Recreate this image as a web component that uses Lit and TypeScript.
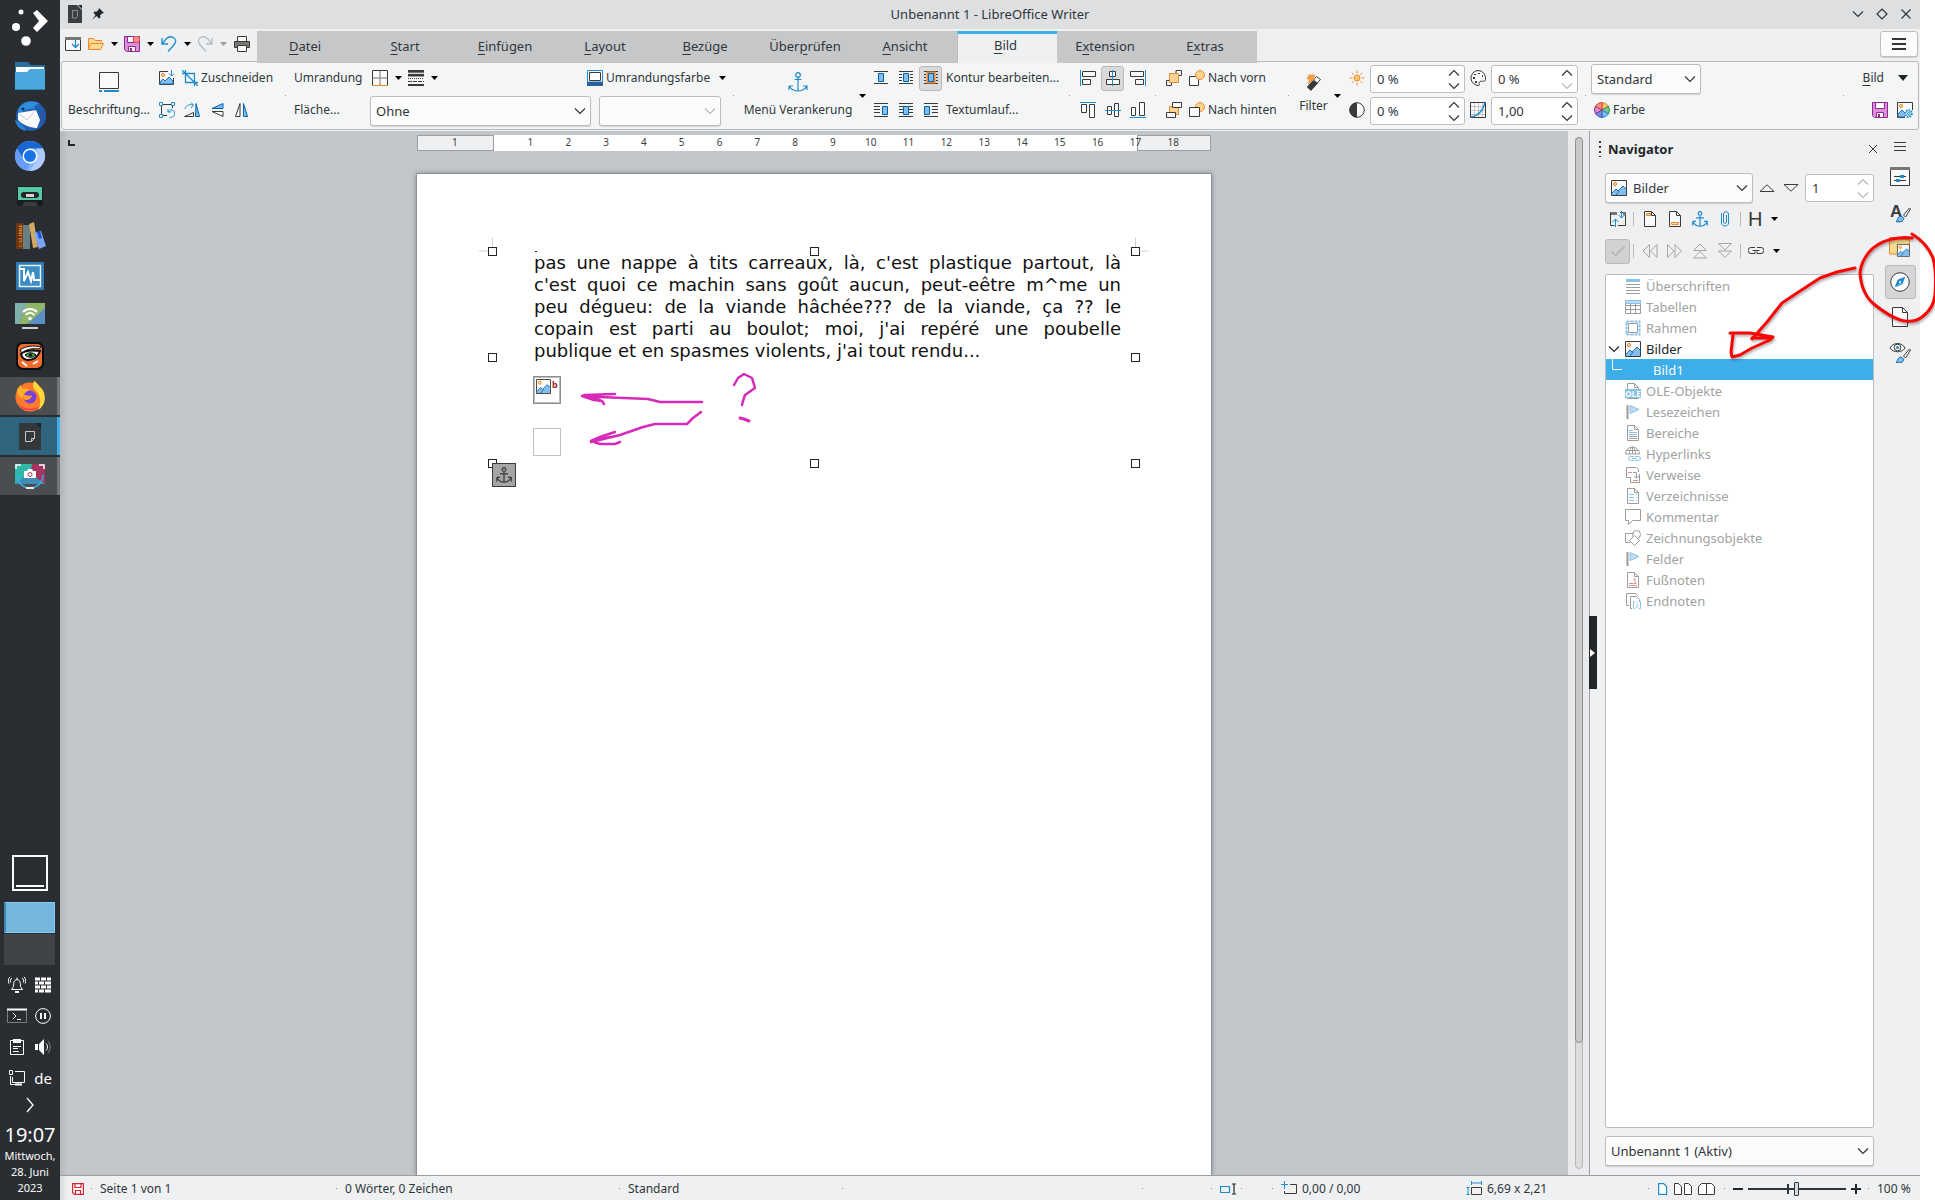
import { LitElement, html, css, svg, nothing, TemplateResult } from "lit";
import { customElement, property, state } from "lit/decorators.js";
import { classMap } from "lit/directives/class-map.js";

type Drawing = { box?: string; w?: number; h?: number; body: unknown };

const page = svg`<path d="M2.5 .5h7l4 4v11h-11z" fill="#fafafa" stroke="#3a3a38"/><path d="M9.5 .5v4h4" fill="none" stroke="#3a3a38"/>`;
const greyPage = svg`<path d="M2.5 .5h7l4 4v11h-11z" fill="#fff" stroke="#9c9c9b"/><path d="M9.5 .5v4h4" fill="none" stroke="#9c9c9b"/>`;
const picture = svg`<path d="M.5 .5h15v15H.5z" fill="#fafafa" stroke="#3a3a38"/><path d="M1 13l4-4 2 2 5-5 3 3v6H1z" fill="#83beec"/><path d="M1 13l4-4 2 2 5-5 3 3M5 15l3-4" fill="none" stroke="#1e6fb4"/><circle cx="4" cy="4" r="1.6" fill="#fbdba0" stroke="#ed8733"/>`;
const flag = svg`<path d="M2.5 1v14" stroke="#9c9c9b" stroke-width="2"/><path d="M5 1.500l9 4-9 4z" fill="#bddcf5" stroke="#8ac1e6"/>`;
const brush = svg`<path d="M19.500 5l-6 7 2 2 5-8z" fill="#fafafa" stroke="#3a3a38"/><path d="M6 18.500c2-1 1-5 5-5.500l3 2.500c-1 3-4 4-8 3z" fill="#83beec" stroke="#0063b1"/>`;

const lines = (x1: number, x2: number, ys: number[]) =>
  svg`<path d="${ys.map((y) => `M${x1} ${y}.5H${x2}`).join("")}" stroke="#3a3a38" fill="none"/>`;
const block = (x: number) => svg`<path d="M${x}.5 4.500h5v8h-5z" fill="#83beec" stroke="#0063b1"/>`;

const icons: Record<string, Drawing> = {
  newdoc: { body: svg`<path d="M.5 1.500h15v13H.5z" fill="#fafafa" stroke="#3a3a38"/><path d="M0 1h16v3H0z" fill="#797774"/><path d="M10.500 3v8M7 8l3.500 3.500L14 8" fill="none" stroke="#1e8bcd" stroke-width="1.300"/>` },
  open: { body: svg`<path d="M.5 13.500v-11h5l2 2h6v2M.5 13.500l2-6h13l-3 6z" fill="#f8db8f" stroke="#ed8733"/>` },
  save: { body: svg`<path d="M.5 .5h15v15h-13l-2-2z" fill="#d98fdc" stroke="#92278f"/><path d="M3.500 .5h9v6h-9zM4.500 10.500h7v5h-7z" fill="#fafafa" stroke="#92278f"/><path d="M6 12h2v3H6z" fill="#92278f"/>` },
  saveDot: { body: svg`<path d="M.5 .5h15v15h-13l-2-2z" fill="#d98fdc" stroke="#92278f"/><path d="M3.500 .5h6v6h-6zM4.500 10.500h7v5h-7z" fill="#fafafa" stroke="#92278f"/><path d="M6 12h2v3H6z" fill="#92278f"/><circle cx="12.500" cy="3.500" r="3.400" fill="#f98b8b" stroke="#e5484d"/>` },
  undo: { body: svg`<path d="M1 2v6h6M1 8l4-5c3-3 7-3 9 0s0 5-2 7l-5 5.500" fill="none" stroke="#1e8bcd" stroke-width="1.300"/>` },
  redo: { body: svg`<path d="M15 2v6H9M15 8l-4-5C8 0 4 0 2 3s0 5 2 7l5 5.500" fill="none" stroke="#b9bcbe" stroke-width="1.300"/>` },
  print: { body: svg`<path d="M3.500 .5h9v5h-9z" fill="#fafafa" stroke="#3a3a38"/><path d="M.5 5.500h15v6H.5z" fill="#797774" stroke="#3a3a38"/><path d="M3.500 9.500h9v6h-9z" fill="#fafafa" stroke="#3a3a38"/>` },
  caption: { w: 20, h: 20, box: "0 0 20 20", body: svg`<path d="M.5 .5h19v16H.5z" fill="#fafafa" stroke="#3a3a38"/><path d="M0 19h3M5 19h15" stroke="#1e8bcd" stroke-width="2"/>` },
  picExport: { body: svg`<path d="M9 1.500H.5v13h14V8" fill="#fafafa" stroke="#3a3a38"/><path d="M1 14v-2l3-3 2 2 4-4 4 4v3z" fill="#83beec" stroke="#1e6fb4"/><circle cx="4" cy="5" r="1.600" fill="#fbdba0" stroke="#ed8733"/><path d="M12.500 0v6M10 3.500l2.500 2.500L15 3.500" fill="none" stroke="#1e8bcd"/>` },
  crop: { body: svg`<path d="M3.500 0v12.500H16M0 3.500h12.500V16M0 0l16 16" fill="none" stroke="#1e8bcd" stroke-width="1.300"/>` },
  rotateBox: { body: svg`<path d="M2.500 3v10M3 2.500h10M3 13.500h5M13.500 3v3" stroke="#3a3a38" fill="none"/><path d="M.5 .5h3v3h-3zM12.500 .5h3v3h-3zM.5 12.500h3v3h-3z" fill="#fafafa" stroke="#1e8bcd"/><path d="M9 7v3h3M9.500 10c2-4 6-2 6 1.500s-3 4-5 4" fill="none" stroke="#1e8bcd"/>` },
  rotate: { body: svg`<path d="M12 1.500l3.500 13h-4z" fill="#83beec" stroke="#0063b1"/><path d="M.5 14.500h9v-4z" fill="#fafafa" stroke="#3a3a38"/><path d="M1 7c1-4 5-5 8-4M7 .5L9.500 3 7 6" fill="none" stroke="#1e8bcd"/>` },
  flipV: { body: svg`<path d="M14 1.500v5H3z" fill="#83beec" stroke="#0063b1"/><path d="M14 14.500v-5H3z" fill="#fafafa" stroke="#3a3a38"/>` },
  flipH: { body: svg`<path d="M6 1.500v13H1.500z" fill="#fafafa" stroke="#3a3a38"/><path d="M9.500 1.500v13h4z" fill="#83beec" stroke="#0063b1"/>` },
  borders: { body: svg`<path d="M.5 15V.5h15V15" fill="#fafafa" stroke="#3a3a38"/><path d="M8 1v14M1 8h14" stroke="#797774"/><path d="M0 15.500h16" stroke="#ed8733"/>` },
  lineStyle: { body: svg`<path d="M0 1.500h16M0 5h16" stroke="#3a3a38" stroke-width="3"/><path d="M0 5h16" stroke="#3a3a38" stroke-width="2"/><path d="M0 3.200h16" stroke="#f4f6f5"/><path d="M0 8.500h16" stroke="#3a3a38" stroke-dasharray="1 1"/><path d="M0 11.500h16" stroke="#3a3a38" stroke-dasharray="4 1"/><path d="M0 15h16" stroke="#3a3a38" stroke-width="2"/>` },
  borderColor: { body: svg`<path d="M.5 .5h15V12H.5z" fill="#fafafa" stroke="#1e8bcd"/><path d="M2.500 2.500h11v8h-11z" fill="#fff" stroke="#3a3a38"/><path d="M0 12h16v4H0z" fill="#2a6099"/>` },
  anchor: { w: 20, h: 20, box: "0 0 20 20", body: svg`<g fill="none" stroke="#1e8bcd" stroke-width="1.200"><circle cx="10" cy="3" r="2.300"/><path d="M10 5.500V19M6.500 7.500h7M1 14v4M1 14h4M1 14c2 3 5 5 9 5s7-2 9-5h-4M19 14v4"/></g>` },
  wrapNone: { body: svg`${lines(1, 15, [1, 13])}<path d="M5.500 3.500h5v8h-5z" fill="#83beec" stroke="#0063b1"/>` },
  wrapPage: { body: svg`${lines(1, 15, [1, 13])}${lines(1, 4, [4, 7, 10])}${lines(12, 15, [4, 7, 10])}<path d="M5.500 3.500h5v8h-5z" fill="#83beec" stroke="#0063b1"/>` },
  wrapContour: { body: svg`${lines(1, 15, [1, 13])}${lines(1, 3, [4, 7, 10])}${lines(13, 15, [4, 7, 10])}<path d="M4.500 2.500h7v10h-7z" fill="none" stroke="#ed8733" stroke-width="2"/><path d="M5.500 3.500h5v8h-5z" fill="#83beec" stroke="#0063b1"/>` },
  wrapLeft: { body: svg`${lines(1, 15, [1, 14])}${lines(1, 7, [4, 7, 10])}${block(9)}` },
  wrapThrough: { body: svg`${lines(1, 15, [1, 4, 7, 10, 14])}${block(5)}` },
  wrapRight: { body: svg`${lines(1, 15, [1, 14])}${lines(9, 15, [4, 7, 10])}${block(1)}` },
  alignL: { body: svg`<path d="M.5 0v16" stroke="#1e8bcd"/><path d="M2.500 1.500h13v5h-13zM2.500 9.500h8v5h-8z" fill="#fafafa" stroke="#3a3a38"/>` },
  alignC: { body: svg`<path d="M4.500 1.500h6v5h-6zM1.500 9.500h13v5h-13z" fill="#fafafa" stroke="#3a3a38"/><path d="M7.500 0v16" stroke="#1e8bcd"/>` },
  alignR: { body: svg`<path d="M15.500 0v16" stroke="#1e8bcd"/><path d="M.5 1.500h13v5H.5zM5.500 9.500h8v5h-8z" fill="#fafafa" stroke="#3a3a38"/>` },
  alignT: { body: svg`<path d="M0 .5h16" stroke="#1e8bcd"/><path d="M1.500 2.500h5v8h-5zM9.500 2.500h5v13h-5z" fill="#fafafa" stroke="#3a3a38"/>` },
  alignM: { body: svg`<path d="M2.500 4.500h4v8h-4zM9.500 1.500h4v13h-4z" fill="#fafafa" stroke="#3a3a38"/><path d="M0 8.500h16" stroke="#1e8bcd"/>` },
  alignB: { body: svg`<path d="M0 15.500h16" stroke="#1e8bcd"/><path d="M1.500 5.500h4v8h-4zM9.500 .5h5v13h-5z" fill="#fafafa" stroke="#3a3a38"/>` },
  front: { body: svg`<path d="M10 3V.5h5.500v5H13M5.500 13v2.500h-5v-5H3" fill="none" stroke="#3a3a38"/><path d="M3.500 3.500h9v9h-9z" fill="#fbd48f" stroke="#ed8733"/>` },
  forward: { body: svg`<path d="M.5 6.500h9v9h-9z" fill="#fafafa" stroke="#3a3a38"/><circle cx="11" cy="5" r="4.500" fill="#fbd48f" stroke="#ed8733"/>` },
  back: { body: svg`<path d="M3.500 4.500h9v8h-9z" fill="#fbd48f" stroke="#ed8733"/><path d="M6.500 .5h9v5h-9zM.5 10.500h9v5h-9z" fill="#fafafa" stroke="#3a3a38"/>` },
  backward: { body: svg`<circle cx="11" cy="5" r="4.500" fill="#fbd48f" stroke="#ed8733"/><path d="M.5 5.500h10v9H.5z" fill="#fafafa" stroke="#3a3a38"/>` },
  filter: { w: 18, h: 18, box: "0 0 18 18", body: svg`<path d="M11.500 2.500l4 3L6 16l-3.500-3z" fill="#fafafa" stroke="#3a3a38"/><path d="M9 6l4 3-7 8-4-4z" fill="#3a3a38"/><path d="M4 1h6L7.500 4H10L3 10l2-5H2z" fill="#f4a13b" stroke="#ed8733" stroke-width=".7"/>` },
  sun: { body: svg`<circle cx="8" cy="8" r="3" fill="#f9c66b" stroke="#ed8733"/><path d="M8 .5v3M8 12.500v3M.5 8h3M12.500 8h3M2.700 2.700l2 2M11.300 11.300l2 2M13.300 2.700l-2 2M4.700 11.300l-2 2" stroke="#ed8733"/>` },
  contrast: { body: svg`<circle cx="8" cy="8" r="7.300" fill="#fafafa" stroke="#3a3a38"/><path d="M8 .5a7.500 7.500 0 0 0 0 15z" fill="#3a3a38"/>` },
  palette: { body: svg`<path d="M8 .5a7.500 7.500 0 1 0 1 15c1-1-1-3 1-4s5 1 5.500-2A7.700 7.700 0 0 0 8 .5z" fill="#fafafa" stroke="#3a3a38"/><path d="M3 7h2v2H3zM4 4h2v1H4zM8 3h2v1H8zM12 5h1v2h-1zM5 11h2v2H5z" fill="#3a3a38"/>` },
  gamma: { body: svg`<path d="M.5 .5h15v15H.5z" fill="#fafafa" stroke="#3a3a38"/><path d="M4.500 1v14M8.500 1v14M12.500 1v14M1 4.500h14M1 8.500h14M1 12.500h14" stroke="#c8c6c4"/><path d="M1 15C9 14 13 8 15 1" fill="none" stroke="#1e8bcd" stroke-width="1.500"/>` },
  wheel: { body: svg`<path d="M8 8L8 .5A7.500 7.500 0 0 1 14.500 4.300z" fill="#f9c66b" stroke="#ed8733"/><path d="M8 8l6.500-3.700a7.500 7.500 0 0 1 0 7.500z" fill="#79c795" stroke="#309048"/><path d="M8 8l6.500 3.800A7.500 7.500 0 0 1 8 15.500z" fill="#83beec" stroke="#1e8bcd"/><path d="M8 8v7.500a7.500 7.500 0 0 1-6.500-3.800z" fill="#6f8fe0" stroke="#3a5fc0"/><path d="M8 8l-6.500 3.700a7.500 7.500 0 0 1 0-7.500z" fill="#d98fdc" stroke="#92278f"/><path d="M8 8L1.500 4.200A7.500 7.500 0 0 1 8 .5z" fill="#f98b8b" stroke="#d33b3b"/>` },
  picGear: { body: svg`<path d="M.5 .5h15v15H.5z" fill="#fafafa" stroke="#3a3a38"/><path d="M1 12l4-4 4 4v3H1z" fill="#83beec" stroke="#1e6fb4"/><circle cx="4" cy="4" r="1.600" fill="#fbdba0" stroke="#ed8733"/><path d="M8 8h8v8H8z" fill="#f4f6f5"/><circle cx="11.500" cy="11.500" r="3.300" fill="#bfe0f7" stroke="#1e8bcd" stroke-width="2" stroke-dasharray="1.500 1"/><circle cx="11.500" cy="11.500" r="1" fill="#fff" stroke="#1e8bcd"/>` },
  picture: { body: picture },
  navWin: { body: svg`<path d="M6 1.500H.5v13h4M10 1.500h5.500v13H8" fill="none" stroke="#3a3a38"/><path d="M1 1h6v3H1zM13 1h3v3h-3z" fill="#797774"/><path d="M11.500 0v7M8.500 4l3 3 3-3M5.500 16V8M2.500 11l3-3 3 3" fill="none" stroke="#1e8bcd"/>` },
  header: { body: svg`${page}<path d="M4.500 2.500h4v2h-4z" fill="#fbdba0" stroke="#ed8733"/>` },
  footer: { body: svg`${page}<path d="M4.500 11.500h7v2h-7z" fill="#fbdba0" stroke="#ed8733"/>` },
  anchorSmall: { box: "0 0 20 20", body: svg`<g fill="none" stroke="#1e8bcd" stroke-width="1.500"><circle cx="10" cy="3" r="2.300"/><path d="M10 5.500V19M5 8.500h10M1 13v5M1 13h4M1 13c2 4 5 6 9 6s7-2 9-6h-4M19 13v5"/></g>` },
  clip: { body: svg`<path d="M9.500 4v7c0 1.500-3 1.500-3 0V3c0-3 5-3 5 0v9c0 4-7 4-7 0V2" fill="none" stroke="#1e8bcd"/>` },
  check: { body: svg`<path d="M1.500 8.500l4 4 9-9" fill="none" stroke="#b4b5b6" stroke-width="1.600"/>` },
  prev: { body: svg`<path d="M7.500 1.500v13L1 8zM15 1.500v13L8.500 8z" fill="none" stroke="#a3a5a7"/>` },
  next: { body: svg`<path d="M.5 1.500v13L7 8zM8 1.500v13L14.500 8z" fill="none" stroke="#a3a5a7"/>` },
  promote: { body: svg`<path d="M1.500 7.500h13L8 1zM1.500 15h13L8 8.500z" fill="none" stroke="#a3a5a7"/>` },
  demote: { body: svg`<path d="M1.500 .5h13L8 7zM1.500 8h13L8 14.500z" fill="none" stroke="#a3a5a7"/>` },
  link: { body: svg`<path d="M7 4.500H3a3 3 0 0 0 0 6h4v-2M9 4.500h4a3 3 0 0 1 0 6H9v-2M4.500 7.500h7" fill="none" stroke="#3a3a38"/>` },
  triUp: { box: "0 0 16 8", h: 8, body: svg`<path d="M1 7.500h14L8 .8z" fill="none" stroke="#3a3a38"/>` },
  triDown: { box: "0 0 16 8", h: 8, body: svg`<path d="M1 .5h14L8 7.200z" fill="none" stroke="#3a3a38"/>` },
  headings: { body: svg`<path d="M1 1h14v3H1z" fill="#8ac1e6"/><path d="M1 6.500h14M1 9.500h14M1 12.500h14M1 15.500h14" stroke="#9c9c9b"/>` },
  tables: { body: svg`<path d="M.5 1.500h15v13H.5z" fill="#fff" stroke="#9c9c9b"/><path d="M1 6.500h14M1 10.500h14M5.500 5v9M10.500 5v9" stroke="#9c9c9b"/><path d="M.5 1.500h15v3H.5z" fill="#bddcf5" stroke="#8ac1e6"/>` },
  frames: { body: svg`<path d="M3.500 3.500h9v9h-9z" fill="#fff" stroke="#9c9c9b"/><path d="M1.500 1.500h13v13h-13z" fill="none" stroke="#8ac1e6" stroke-width="2" stroke-dasharray="3 1"/>` },
  ole: { body: svg`<path d="M2.500 6V.5h7l4 4V6M2.500 14v1.500h11V14M9.500 .5v4h4" fill="none" stroke="#9c9c9b"/><path d="M0 6h16v9H0z" fill="#8ac1e6"/><text x="8" y="13.500" text-anchor="middle" font-size="8" font-weight="700" font-family="Noto Sans, sans-serif" fill="#fff">OLE</text>` },
  flag: { body: flag },
  sections: { body: svg`${greyPage}<path d="M4 5.500h4M4 7.500h8M4 9.500h8" stroke="#8ac1e6"/><path d="M4 11.500h8M4 13.500h8" stroke="#9c9c9b"/>` },
  hyper: { body: svg`<path d="M.5 8a7 7 0 0 1 14 0zM4.500 8c0-9 6-9 6 0M7.500 1v7M1.500 4.500h12" fill="none" stroke="#9c9c9b"/><path d="M9 10.500H5.500a2 2 0 0 0 0 4H9M10 10.500h3.500a2 2 0 0 1 0 4H10M7 12.500h5" fill="none" stroke="#8ac1e6"/>` },
  refs: { body: svg`<path d="M5 10.500H1.500v-10h10l2 2V5M5.500 10v5.500h9V7" fill="none" stroke="#9c9c9b"/><path d="M3 5.500h4M8 13.500h5" stroke="#f08a8a"/><path d="M8 5.500h3.500V11M9 9l2.500 2L14 9" fill="none" stroke="#9c9c9b"/>` },
  indexes: { body: svg`${greyPage}<path d="M4 6.500h5M4 9.500h5M4 12.500h5" stroke="#8ac1e6"/><path d="M11 6.500h1M11 9.500h1M11 12.500h1" stroke="#8ac1e6"/>` },
  comment: { body: svg`<path d="M.5 .5h15v11h-8l-4 4v-4h-3z" fill="#fff" stroke="#9c9c9b"/>` },
  shapes: { body: svg`<path d="M9 3.500H.5v9h5" fill="none" stroke="#9c9c9b"/><circle cx="11.500" cy="4.500" r="4" fill="none" stroke="#9c9c9b"/><path d="M9.500 5.500l5 5-5 5-5-5z" fill="#fff" stroke="#9c9c9b"/>` },
  footnote: { body: svg`${greyPage}<path d="M4 11.500h4" stroke="#9c9c9b"/><path d="M4 13.500h8M8.500 7.500l1.500-1v5M8.500 11.500h3" fill="none" stroke="#f08a8a"/>` },
  endnote: { body: svg`<path d="M4 12.500H1.500V.5h9l2 2M5.500 3.500h6l3 3V8M7 15.500H5.500v-12" fill="none" stroke="#9c9c9b"/><path d="M10 8.500H8.500v7H10M14 8.500h1.500v7H14M12 9v1M12 11v4" fill="none" stroke="#8ac1e6"/>` },
  menu: { w: 12, h: 12, box: "0 0 12 12", body: svg`<path d="M0 1.500h12M0 5.500h12M0 9.500h12" stroke="#3a3a38"/>` },
  menuBold: { w: 14, h: 14, box: "0 0 14 14", body: svg`<path d="M0 2h14M0 7h14M0 12h14" stroke="#31363b" stroke-width="2"/>` },
  props: { w: 20, h: 20, box: "0 0 20 20", body: svg`<path d="M.5 .5h19v18H.5z" fill="#fafafa" stroke="#3a3a38"/><path d="M0 0h20v3H0z" fill="#797774"/><path d="M4 9.500h12M4 13.500h12" stroke="#3a3a38"/><path d="M10 8h4v3h-4zM6 12h4v3H6z" fill="#1e8bcd"/>` },
  styles: { w: 22, h: 22, box: "0 0 22 22", body: svg`<text x="1" y="16" font-size="17" font-weight="700" font-family="Liberation Sans, sans-serif" fill="#3a3a38">A</text><g transform="translate(1 2)">${brush}</g>` },
  gallery: { w: 22, h: 20, box: "0 0 22 20", body: svg`<path d="M.5 17V.5h8l2 2h10v15z" fill="#f8db8f" stroke="#ed8733"/><g transform="translate(8 7) scale(.8)">${picture}</g>` },
  compass: { w: 20, h: 20, box: "0 0 20 20", body: svg`<circle cx="10" cy="10" r="9.300" fill="#fafafa" stroke="#3a3a38"/><path d="M14.500 5.500L12 12l-6.500 2.500L8 8z" fill="#fafafa" stroke="#1e8bcd"/><path d="M14.500 5.500L12 12l-1-1-2-2-1-1zM5.500 14.500L8 8l3 3z" fill="#1e8bcd"/><circle cx="10" cy="10" r="1" fill="#fff"/>` },
  pageTab: { w: 16, h: 20, box: "0 0 16 20", body: svg`<path d="M.5 .5h10l5 5v14H.5z" fill="#fafafa" stroke="#3a3a38"/><path d="M10.500 .5v5h5" fill="none" stroke="#3a3a38"/>` },
  inspect: { w: 22, h: 22, box: "0 0 22 22", body: svg`<path d="M1 7c3-6 12-6 15 0-3 5-12 5-15 0z" fill="#fafafa" stroke="#3a3a38"/><circle cx="8.500" cy="6.500" r="3.300" fill="#fafafa" stroke="#3a3a38"/><circle cx="8.500" cy="6.500" r="1.500" fill="#1e8bcd"/><g transform="translate(1 3)">${brush}</g>` },
  chevron: { w: 12, h: 12, box: "0 0 12 12", body: svg`<path d="M1 3.500l5 5 5-5" fill="none" stroke="currentColor" stroke-width="1.200"/>` },
  diamond: { w: 12, h: 12, box: "0 0 12 12", body: svg`<path d="M6 1l5 5-5 5-5-5z" fill="none" stroke="#31363b" stroke-width="1.200"/>` },
  close: { w: 12, h: 12, box: "0 0 12 12", body: svg`<path d="M1.500 1.500l9 9M10.500 1.500l-9 9" fill="none" stroke="#31363b" stroke-width="1.200"/>` },
  closeSmall: { w: 10, h: 10, box: "0 0 10 10", body: svg`<path d="M1 1l8 8M9 1L1 9" fill="none" stroke="#3a3a38"/>` },
  drop: { w: 7, h: 4, box: "0 0 7 4", body: svg`<path d="M0 0h7L3.500 4z" fill="currentColor"/>` },
  dropBig: { w: 10, h: 6, box: "0 0 10 6", body: svg`<path d="M0 0h10L5 6z" fill="#232629"/>` },
  docMini: { w: 14, h: 18, box: "0 0 14 18", body: svg`<path d="M0 0h9l5 5v13H0z" fill="#3b3f42"/><path d="M10 0h4v4z" fill="#232629"/><path d="M4.500 5.500h5v6l-1.500 1.500H4.500z" fill="none" stroke="#8b8f92"/>` },
  pin: { w: 12, h: 12, box: "0 0 12 12", body: svg`<path d="M7 0l5 5-2 .5-2 2 .5 2-1.500 1L4.500 8 0 12l3.500-5L1.500 5l1-1.500 2 .3 2-2z" fill="#232629"/>` },
  saveRed: { w: 12, h: 12, box: "0 0 12 12", body: svg`<path d="M.6 .6h10.800v10.800H2.500L.6 9.500z" fill="#fff" stroke="#d8232a" stroke-width="1.200"/><path d="M3 .5v4h6v-4M3.500 11.500v-4h5v4" fill="none" stroke="#d8232a" stroke-width="1.200"/>` },
  selMode: { w: 18, h: 12, box: "0 0 18 12", body: svg`<path d="M.5 3.500h9v6h-9z" fill="none" stroke="#1e8bcd" stroke-width="1.200"/><path d="M12 1h4M14 1v10M12 11h4" fill="none" stroke="#232629" stroke-width="1.200"/>` },
  position: { body: svg`<path d="M3.500 0v8M0 3.500h7" stroke="#1e8bcd"/><path d="M9 3.500h6.500v9h-12V10" fill="none" stroke="#3a3a38"/>` },
  size: { body: svg`<path d="M5.500 0v4M15.500 0v4M5 2h11M.5 6.500h3M.5 13.500h3M2 7v6" stroke="#1e8bcd" fill="none"/><path d="M5.500 6.500h10v7h-10z" fill="none" stroke="#3a3a38"/>` },
  onePage: { w: 10, h: 12, box: "0 0 10 12", body: svg`<path d="M.6 .6h5l3 3v7.800h-8z" fill="#fff" stroke="#1e8bcd" stroke-width="1.200"/>` },
  twoPages: { w: 18, h: 12, box: "0 0 18 12", body: svg`<path d="M.5 .5h4l3 3v8h-7zM10.500 .5h4l3 3v8h-7z" fill="#fff" stroke="#3a3a38"/>` },
  book: { w: 18, h: 12, box: "0 0 18 12", body: svg`<path d="M.5 11.500v-8l3-3h5v11zM8.500 .5h5l3 3v8h-8z" fill="#fff" stroke="#3a3a38"/>` },
  minus: { w: 10, h: 10, box: "0 0 10 10", body: svg`<path d="M0 5h10" stroke="#232629" stroke-width="2"/>` },
  plus: { w: 10, h: 10, box: "0 0 10 10", body: svg`<path d="M0 5h10M5 0v10" stroke="#232629" stroke-width="2"/>` },
  bell: { w: 18, h: 18, box: "0 0 18 18", body: svg`<g fill="none" stroke="#fcfcfc"><path d="M3.500 13.500h11l-2-3c0-4-.5-6.500-3.500-7-3 .5-3.500 3-3.500 7z"/><path d="M9 1.500v2M4 2C2.500 3 2 4.500 2.500 6.500M2 .8C.2 2.500 0 5 .8 7.500M14 2c1.500 1 2 2.500 1.500 4.500M16 .8c1.800 1.700 2 4.200 1.200 6.700"/></g><path d="M7 15h4v2H7z" fill="#fcfcfc"/>` },
  wall: { w: 16, h: 16, box: "0 0 16 16", body: svg`<path d="M0 2.500h5M6 2.500h5M12 2.500h4M0 6.500h3M4 6.500h5M10 6.500h6M0 10.500h5M6 10.500h5M12 10.500h4M0 14.500h3M4 14.500h5M10 14.500h6" transform="translate(0 -.5)" stroke="#fcfcfc" stroke-width="3"/>` },
  terminal: { w: 20, h: 16, box: "0 0 20 16", body: svg`<path d="M.5 1v13.500h19V1" fill="none" stroke="#7b7e81"/><path d="M0 1.500h20" stroke="#fcfcfc" stroke-width="2"/><path d="M6 5l3 3-3 3M10 11.500h4" fill="none" stroke="#fcfcfc"/>` },
  pause: { w: 16, h: 16, box: "0 0 16 16", body: svg`<circle cx="8" cy="8" r="7.400" fill="none" stroke="#fcfcfc"/><path d="M6 5v6M10 5v6" stroke="#fcfcfc" stroke-width="2"/>` },
  clipboard: { w: 16, h: 16, box: "0 0 16 16", body: svg`<path d="M1.500 1.500h13v14h-13z" fill="none" stroke="#fcfcfc"/><path d="M4 0h8v4H4z" fill="#fcfcfc"/><path d="M4 7.500h8M4 9.500h5M4 12.500h6" stroke="#fcfcfc"/>` },
  speaker: { w: 16, h: 16, box: "0 0 16 16", body: svg`<path d="M0 5h3v6H0zM4 5l5-5v16l-5-5z" fill="#fcfcfc"/><path d="M11 4.500c2 2 2 5 0 7" fill="none" stroke="#fcfcfc"/><path d="M13 2c3 4 3 8 0 12" fill="none" stroke="#7b7e81"/>` },
  network: { w: 18, h: 18, box: "0 0 18 18", body: svg`<path d="M7 2.500h9.500v11h-12V8M2.500 7v8.500h5M1.500 1.500h3v4h-3zM10 14v2" fill="none" stroke="#fcfcfc"/><path d="M7 15.500h7" stroke="#fcfcfc" stroke-width="2"/>` },
  tri: { w: 5, h: 8, box: "0 0 5 8", body: svg`<path d="M0 0l5 4-5 4z" fill="#fcfcfc"/>` },
};

const icon = (name: string) => {
  const d = icons[name];
  const w = d.w ?? 16;
  const h = d.h ?? 16;
  return html`<svg class="ic" width=${w} height=${h} viewBox=${d.box ?? `0 0 16 16`} aria-hidden="true">${d.body}</svg>`;
};

const launchers: { name: string; state?: string; art: unknown }[] = [
  { name: "Dateien", art: svg`<path d="M1 2h13l3 3h14v10H1z" fill="#2a6f9c"/><path d="M2 7h28v8H2z" fill="#fcfcfc"/><path d="M1 12h12l3-3h15v21H1z" fill="#49a9dc"/><path d="M1 29h30v1H1z" fill="#2b83b5"/>` },
  { name: "Thunderbird", art: svg`<circle cx="17" cy="16" r="15" fill="#1f5fb4"/><path d="M5 9C8 2 18-1 26 4c-4 0-6 2-6 5-6-1-11 1-15 6-1-2-1-4 0-6z" fill="#2f8fdc"/><path d="M1 20c1 6 5 10 11 11-1-4-5-8-11-11z" fill="#2a7fd0"/><path d="M4 13l18-3 4 10-3 8C15 28 8 24 4 20z" fill="#fafafa"/><path d="M4 13l9 7 9-10" fill="none" stroke="#c9c9c9"/><circle cx="9" cy="9" r="1.500" fill="#0b2c55"/><path d="M28 9c3 5 3 12-2 17 1-6 1-11-1-15z" fill="#2a56a0"/>` },
  { name: "Chromium", art: svg`<circle cx="16" cy="16" r="15" fill="#8ab4f8"/><path d="M3 8.500A15 15 0 0 1 29 8.500H16L9.500 19.500z" fill="#1967d2"/><path d="M3 8.500L9.500 20l6.500 3.500-3 7.200A15 15 0 0 1 3 8.500z" fill="#669df6"/><path d="M29 8.500a15 15 0 0 1-13 22.500l6.500-11 .5-11.500z" fill="#aecbfa"/><circle cx="16" cy="16" r="7.500" fill="#fff"/><circle cx="16" cy="16" r="6" fill="#1a73e8"/>` },
  { name: "Kassette", art: svg`<rect x="3" y="6" width="26" height="20" rx="2" fill="#1b1d1f"/><path d="M4 7h24v13H4z" fill="#56c9a6"/><rect x="7" y="12" width="18" height="6" rx="3" fill="#232629"/><path d="M12 14h8v3h-8z" fill="#d9d3c8"/><path d="M8 26l2-4h12l2 4z" fill="#3a3d40"/>` },
  { name: "Calibre", art: svg`<path d="M2 3h7v26H2z" fill="#6e3410"/><path d="M9 5h7v24H9z" fill="#687f84"/><path d="M15 4l5-2 4 25-5 1z" fill="#d1a960"/><path d="M20 13l7-2 5 15-7 3z" fill="#7ba4f5"/><path d="M23 12l3-1 2 7-3 1z" fill="#1e54c7"/><text transform="translate(8 27) rotate(-90)" font-size="5" font-weight="700" font-family="Liberation Serif, serif" fill="#e5a03c">CALIBRE</text>` },
  { name: "Systemmonitor", art: svg`<path d="M2 2h28v28H2z" fill="#2d7ab4"/><path d="M5.500 5.500h21v21h-21z" fill="#3a8cc5" stroke="#e6f1f8" stroke-width="1.500"/><path d="M6 9h4v12l4-9 3 9 2-9 1 8h6" fill="none" stroke="#fff" stroke-width="2"/>` },
  { name: "Netzwerkanzeige", art: svg`<path d="M1 3h30v21H1z" fill="#5a8c86"/><path d="M1 3h12L5 24H1z" fill="#7fb0ae"/><path d="M13 3h18v9L12 24H5z" fill="#8fb56a"/><path d="M31 8v16H14z" fill="#5b8fc5"/><path d="M9 12c4-4 10-4 14 0M11.500 15c3-3 6-3 9 0" fill="none" stroke="#fff" stroke-width="2"/><circle cx="16" cy="18.500" r="1.800" fill="#fff"/><path d="M8 28h16" stroke="#cfd0d1" stroke-width="2"/>` },
  { name: "Tiger", art: svg`<rect x="3" y="3" width="26" height="26" rx="6" fill="#ef6c2f" stroke="#0b0b0b" stroke-width="2"/><path d="M6 10c5-4 14-5 21-3l-2 2c-7-1-12 0-17 4z" fill="#fafafa" stroke="#0b0b0b"/><path d="M7 14c4-4 12-4 19-3-2 6-6 9-12 9-4 0-6-2-7-6z" fill="#fafafa" stroke="#0b0b0b" stroke-width="2"/><path d="M11 15c3-3 8-3 11 0-3 3-8 3-11 0z" fill="#3f9c46" stroke="#0b0b0b"/><circle cx="16.500" cy="15" r="1.500" fill="#0b0b0b"/><path d="M8 22l5 4M24 21l-5 3" stroke="#fafafa" stroke-width="2"/>` },
  { name: "Firefox", state: "open", art: svg`<circle cx="16" cy="17" r="14.500" fill="#ff7a2a"/><path d="M20 1c5 3 5 6 8 8 5 8 3 17-4 21 3-5 3-13-1-18-4-3-5-7-3-11z" fill="#ffd83a"/><path d="M3 10c1-2 2-4 4-5 0 2 1 3 2 4 3-1 5 0 7 1l-3 4c-3 1-4 2-4 4-4-1-6-4-6-8z" fill="#ffb02e"/><path d="M4 24c4 7 16 9 22 2-6 4-15 4-22-2z" fill="#f5316a"/><circle cx="16" cy="17" r="6.500" fill="#7542d9"/><path d="M9 15c3-1 6 2 9 0 0 3-3 5-6 5-2 0-3-2-3-5z" fill="#ff9a2e"/>` },
  { name: "LibreOffice Writer", state: "current", art: svg`<path d="M5 3h16l6 6v21H5z" fill="#33373a"/><path d="M21 3h6v6z" fill="#17252e"/><path d="M11.500 11.500h9v7l-3 3h-6z" fill="none" stroke="#c3c5c6"/><path d="M20.500 18.500h-3v3" fill="none" stroke="#c3c5c6"/>` },
  { name: "Spectacle", state: "open", art: svg`<path d="M1 4h30v20H1z" fill="#2fb7a9"/><path d="M18 4h13v20L16 14z" fill="#a5345f"/><path d="M1 24L16 12l13 12z" fill="#3d8fb5"/><path d="M10 11h3l1-2h4l1 2h3v7H10z" fill="#fff"/><circle cx="16" cy="14.500" r="2" fill="#fff" stroke="#a5345f"/><path d="M2 9V5h5M25 5h5v4" fill="none" stroke="#fff" stroke-width="1.500"/><path d="M3 15a13 13 0 0 0 26 0" fill="none" stroke="#3daee9" stroke-width="1.500"/><path d="M12 28h8" stroke="#e8e8e8" stroke-width="2"/>` },
];

const base = css`
  * { box-sizing: border-box; }
  button, input, select { font: inherit; color: inherit; margin: 0; }
  button { border: 0; background: none; padding: 0; display: flex; align-items: center; white-space: nowrap; }
  .ic { display: block; flex: none; }
  u { text-underline-offset: 3px; }
  .field { display: grid; flex: none; align-items: center; height: 30px; background: #fcfcfc; border: 1px solid #bbbdbf; border-radius: 3px; box-shadow: 0 1px 1px #00000026; font-size: 13px; }
  .field > * { grid-area: 1 / 1; }
  .field select { appearance: none; width: 100%; height: 28px; border: 0; background: none; padding: 0 24px 0 5px; outline: 0; opacity: 1; }
  .field > .ic { justify-self: end; margin-right: 4px; pointer-events: none; }
  .field.off > .ic { color: #b6b8ba; }
  .spin { display: flex; flex: none; height: 28px; background: #fff; border: 1px solid #bbbdbf; border-radius: 3px; align-items: center; padding-right: 4px; font-size: 13px; }
  .spin input { flex: 1; min-width: 0; width: 0; border: 0; outline: 0; background: none; padding: 0 0 0 6px; height: 24px; }
  .spin .steps { display: grid; gap: 1px; }
  .spin .steps button.up svg { transform: rotate(180deg); }
  .spin .steps .dim { color: #b6b8ba; }
`;

const spin = (label: string, value: string, cls: string, dimUp = false, dimDown = false) => html`
  <div class="spin ${cls}">
    <input type="text" aria-label=${label} .value=${value} />
    <div class="steps">
      <button class=${classMap({ up: true, dim: dimUp })} aria-label="${label} erhöhen">${icon("chevron")}</button>
      <button class=${classMap({ dim: dimDown })} aria-label="${label} verringern">${icon("chevron")}</button>
    </div>
  </div>`;

const combo = (label: string, value: string, cls: string, lead: unknown = nothing) => html`
  <div class="field ${cls}">
    <select aria-label=${label}><option>${value}</option></select>
    ${icon("chevron")}
    ${lead}
  </div>`;

@customElement("desk-dock")
export class DeskDock extends LitElement {
  static styles = [base, css`
    :host { display: flex; flex-direction: column; background: #2a2e32; color: #fcfcfc; font: 15px/20px "Noto Sans", sans-serif; }
    .start { height: 56px; justify-content: center; }
    .app { height: 40px; width: 60px; justify-content: center; }
    .app.open { background: #4a4e51; border-right: 3px solid #74777a; padding-left: 3px; height: 38px; margin: 1px 0; }
    .app.current { background: #31657f; border-right: 3px solid #3daee9; padding-left: 3px; height: 38px; margin: 1px 0; }
    .gap { flex: 1; }
    .desk { width: 36px; height: 36px; border: 2px solid #fcfcfc; align-self: center; align-items: flex-end; padding: 2px; }
    .desk span { height: 2px; flex: 1; background: #fcfcfc; }
    .pager { display: grid; gap: 1px; margin: 11px 5px 0 4px; }
    .pager button { height: 31px; background: #404346; }
    .pager button.on { background: #75b6db; border: 1px solid #7fcdfa; border-left: 2px solid #3a87b2; }
    .tray { display: grid; grid-template-columns: 26px 26px; grid-auto-rows: 31px; margin: 5px 0 0 4px; justify-items: center; }
    .tray button { height: 30px; }
    .more { align-self: center; height: 22px; transform: rotate(-90deg); }
    .clock { font-size: 20px; line-height: 26px; text-align: center; margin-top: 6px; }
    .date { font-size: 11px; line-height: 16px; text-align: center; padding-bottom: 4px; }
  `];
  render() {
    const tray = ["bell", "wall", "terminal", "pause", "clipboard", "speaker", "network"];
    return html`
      <button class="start" aria-label="Anwendungen">
        <svg class="ic" width="40" height="40" viewBox="0 0 40 40"><circle cx="11" cy="4" r="2.500" fill="#fff"/><circle cx="6" cy="19" r="4" fill="#fff"/><circle cx="16" cy="33" r="4.800" fill="#fff"/><path d="M23 5l4-3 11 11-11 11-4-4 6-7z" fill="#fff"/></svg>
      </button>
      ${launchers.map((l) => html`<button class="app ${l.state ?? ""}" aria-label=${l.name}>
        <svg class="ic" width="32" height="32" viewBox="0 0 32 32">${l.art}</svg></button>`)}
      <div class="gap"></div>
      <button class="desk" aria-label="Arbeitsfläche anzeigen"><span></span></button>
      <div class="pager"><button class="on" aria-label="Arbeitsfläche 1"></button><button aria-label="Arbeitsfläche 2"></button></div>
      <div class="tray">
        ${tray.map((t) => html`<button aria-label=${t}>${icon(t)}</button>`)}
        <button>de</button>
      </div>
      <button class="more" aria-label="Mehr"><svg class="ic" width="18" height="18" viewBox="0 0 18 18"><path d="M2 6l7 6 7-6" fill="none" stroke="#fcfcfc" stroke-width="1.300"/></svg></button>
      <div class="clock">19:07</div>
      <div class="date">Mittwoch,<br />28. Juni<br />2023</div>`;
  }
}

@customElement("writer-ribbon")
export class WriterRibbon extends LitElement {
  static styles = [base, css`
    :host { display: flex; height: 69px; margin: 0 1px; border: 1px solid #b8babc; border-radius: 3px; background: #f4f6f5; font: 12px/16px "Noto Sans", sans-serif; color: #31363b; }
    .g { display: grid; grid-template-rows: 32px 32px; align-items: center; flex: none; }
    .row { display: flex; align-items: center; }
    .field, .spin { margin-top: 2px; }
    .dot { width: 1px; height: 1px; background: #9a9c9e; align-self: center; flex: none; }
    .i { width: 25px; height: 25px; justify-content: center; flex: none; }
    .i.on { width: 23px; margin: 0 1px; background: #d9dbdb; border: 1px solid #b8babc; border-radius: 3px; }
    .l { gap: 3px; padding-left: 3px; }
    .big { flex-direction: column; flex: none; gap: 10px; padding: 10px 0 0; justify-content: flex-start; }
    .thin { width: 10px; justify-content: center; color: #000; flex: none; margin: 0 1px 0 -1px; }
    .d { gap: 7px; width: 36px; padding-left: 2px; color: #000; }
    .c1 { width: 92px; padding-left: 2px; }
    .c2 { width: 131px; }
    .c3 { width: 447px; padding-left: 8px; }
    .c4 { width: 124px; padding-left: 4px; }
    .c5 { width: 201px; }
    .c6 { width: 85px; padding-left: 5px; }
    .c7 { width: 132px; padding-left: 5px; }
    .c8 { width: 44px; padding-left: 5px; gap: 6px; padding-top: 12px; }
    .c9 { width: 242px; padding-left: 6px; }
    .c9 .row { gap: 5px; }
    .c10 { flex: 1; padding-left: 5px; }
    .c11 { width: 74px; justify-items: end; padding-right: 1px; }
    .cap { width: 76px; }
    .lines { width: 217px; }
    .wide { width: 221px; }
    .mid { width: 122px; margin-left: 8px; }
    .w95 { width: 95px; }
    .w86 { width: 87px; }
    .std { width: 110px; }
    .color { gap: 5px; }
    .color .l { gap: 3px; padding: 0; }
    .drop { color: #000; padding: 4px; }
    .ctx { gap: 14px; padding-right: 9px; font-size: 12px; }
  `];
  render() {
    const b = (name: string, on = false) => html`<button class=${classMap({ i: true, on })} aria-label=${name} aria-pressed=${on}>${icon(name)}</button>`;
    const l = (name: string, text: string) => html`<button class="l">${icon(name)}${text}</button>`;
    const dot = html`<span class="dot"></span>`;
    return html`
      <button class="big c1">${icon("caption")}<span>Beschriftung...</span></button>
      <div class="g c2">
        <div class="row">${b("picExport")}${l("crop", "Zuschneiden")}</div>
        <div class="row">${b("rotateBox")}${b("rotate")}${b("flipV")}${b("flipH")}</div>
      </div>
      ${dot}
      <div class="g c3">
        <div class="row"><span class="cap">Umrandung</span>
          <div class="row lines">
            <button class="d" aria-label="Rahmen">${icon("borders")}${icon("drop")}</button>
            <button class="d" aria-label="Linienstil">${icon("lineStyle")}${icon("drop")}</button>
          </div>
          <div class="row color"><button class="l">${icon("borderColor")}Umrandungsfarbe</button><button class="drop" aria-label="Farben">${icon("drop")}</button></div>
        </div>
        <div class="row"><span class="cap">Fläche...</span>${combo("Füllart", "Ohne", "wide")}${combo("Füllung", "", "mid off")}</div>
      </div>
      ${dot}
      <button class="big c4">${icon("anchor")}<span>Menü Verankerung</span></button>
      <button class="thin" aria-label="Verankerung wählen">${icon("drop")}</button>
      <div class="g c5">
        <div class="row">${b("wrapNone")}${b("wrapPage")}${b("wrapContour", true)}<button class="l">Kontur bearbeiten...</button></div>
        <div class="row">${b("wrapLeft")}${b("wrapThrough")}${b("wrapRight")}<button class="l">Textumlauf...</button></div>
      </div>
      ${dot}
      <div class="g c6">
        <div class="row">${b("alignL")}${b("alignC", true)}${b("alignR")}</div>
        <div class="row">${b("alignT")}${b("alignM")}${b("alignB")}</div>
      </div>
      ${dot}
      <div class="g c7">
        <div class="row">${b("front")}${l("forward", "Nach vorn")}</div>
        <div class="row">${b("back")}${l("backward", "Nach hinten")}</div>
      </div>
      ${dot}
      <button class="big c8">${icon("filter")}<span>Filter</span></button>
      <button class="thin" aria-label="Filter wählen">${icon("drop")}</button>
      <div class="g c9">
        <div class="row">${icon("sun")}${spin("Helligkeit", "0 %", "w95")}${icon("palette")}${spin("Transparenz", "0 %", "w86", false, true)}</div>
        <div class="row">${icon("contrast")}${spin("Kontrast", "0 %", "w95")}${icon("gamma")}${spin("Gamma", "1,00", "w86")}</div>
      </div>
      ${dot}
      <div class="g c10">
        <div class="row">${combo("Grafikmodus", "Standard", "std")}</div>
        <div class="row">${l("wheel", "Farbe")}</div>
      </div>
      ${dot}
      <div class="g c11">
        <button class="ctx"><span><u>B</u>ild</span>${icon("dropBig")}</button>
        <div class="row">${b("save")}${b("picGear")}</div>
      </div>`;
  }
}

@customElement("writer-canvas")
export class WriterCanvas extends LitElement {
  static styles = [base, css`
    :host { display: flex; flex: 1; min-width: 0; min-height: 0; }
    .area { flex: 1; min-width: 0; display: flex; flex-direction: column; align-items: center; background: linear-gradient(90deg, #b3b6ba, #c3c6cb 8px); overflow: hidden; padding-top: 4px; position: relative; }
    .corner { position: absolute; left: 8px; top: 9px; width: 7px; height: 6px; border: solid #232629; border-width: 0 0 2px 2px; }
    .ruler { width: 794px; height: 16px; display: grid; flex: none; background: #fff; }
    .ruler > * { grid-area: 1 / 1; }
    .margins { display: flex; justify-content: space-between; }
    .margins span { width: 77px; background: #eff0f1; border: 1px solid #9b9da0; }
    .margins span + span { width: 74px; }
    .cm { display: flex; font: 10px/14px "Noto Sans", sans-serif; color: #3c4044; text-align: center; }
    .cm span { flex: 2; }
    .cm .half { flex: 1; }
    .sheet { position: relative; width: 794px; flex: 1; margin-top: 23px; background: #fff; box-shadow: 0 0 0 1px #8b9094, 0 0 5px 1px #0000004d; padding: 77px 76px 0 75px; }
    .frame { position: relative; height: 212px; padding: 1px 14px 0 42px; display: flex; flex-direction: column; font: 18px/22px "DejaVu Sans", sans-serif; color: #111; }
    .line { text-align: justify; text-align-last: justify; white-space: nowrap; }
    .line.last { text-align-last: left; }
    .box { width: 28px; height: 28px; border: 1px solid #c0c0c0; margin: 0 0 24px -1px; display: flex; flex: none; }
    .box.broken { border: 1px solid #8e8e8e; margin-top: 14px; padding: 2px; gap: 1px; font: 700 9px/12px "Noto Sans", sans-serif; color: #a4202a; outline: 1px solid #bdbdbd; outline-offset: -2px; }
    .h { position: absolute; width: 9px; height: 9px; border: 1px solid #232629; background: #fff; margin: -4px; }
    .n { top: 0; } .m { top: 50%; } .s { top: 100%; }
    .w { left: 0; } .c { left: 50%; } .e { left: 100%; }
    .anchor { position: absolute; left: 0; top: 212px; width: 24px; height: 24px; background: #a5a5a4; border: 1px solid #3a3a38; justify-content: center; }
    .ink { position: absolute; left: 0; top: 0; pointer-events: none; }
    .scroll { width: 21px; background: #e9eaec; flex: none; padding: 6px 6px 6px 7px; display: flex; }
    .track { flex: 1; display: flex; border: 1px solid #b5b7b8; border-radius: 4px; background: #dbdcdc; }
    .thumb { flex: 1; height: 88%; margin: -1px; border: 1px solid #8e9092; border-radius: 4px; background: #c8c9c9; }
  `];
  render() {
    const cm = Array.from({ length: 20 }, (_, k) => (k === 1 ? "" : String(Math.abs(k - 1))));
    const grips = ["n w", "n c", "n e", "m w", "m e", "s w", "s c", "s e"];
    const lines = [
      "pas une nappe à tits carreaux, là, c'est plastique partout, là",
      "c'est quoi ce machin sans goût aucun, peut-eêtre m^me un",
      "peu dégueu: de la viande hâchée??? de la viande, ça ?? le",
      "copain est parti au boulot; moi, j'ai repéré une poubelle",
    ];
    return html`
      <div class="area">
        <span class="corner"></span>
        <div class="ruler">
          <div class="margins"><span></span><span></span></div>
          <div class="cm"><span class="half"></span>${cm.map((n) => html`<span>${n}</span>`)}<span class="half"></span></div>
        </div>
        <div class="sheet">
          <div class="frame">
            ${lines.map((t) => html`<div class="line">${t}</div>`)}
            <div class="line last">publique et en spasmes violents, j'ai tout rendu...</div>
            <div class="box broken"><svg width="15" height="15" viewBox="0 0 16 16">${picture}</svg><span>b</span></div>
            <div class="box"></div>
            ${grips.map((g) => html`<span class="h ${g}"></span>`)}
            <button class="anchor" aria-label="Anker"><svg class="ic" width="16" height="16" viewBox="0 0 20 20"><g fill="none" stroke="#3a3a38" stroke-width="1.500"><circle cx="10" cy="3" r="2.300"/><path d="M10 5.500V19M5 8.500h10M1 13v5M1 13h4M1 13c2 4 5 6 9 6s7-2 9-6h-4M19 13v5"/></g></svg></button>
          </div>
          <svg class="ink" width="794" height="340" viewBox="417 174 794 340">
            <path d="M479 251h9M492.500 238v9M1148.500 251h-9M1135.500 238v9" stroke="#cfcfcf" fill="none"/>
            <path d="M535 251.500h2" stroke="#222"/>
            <g fill="none" stroke="#d62bb8" stroke-width="2.500" stroke-linecap="round" stroke-linejoin="round">
              <path d="M702 402H660L648 399 600 397 582 396M615 394L585 395 582 396 594 400 602 401 604 404M585 397l15 3"/>
              <path d="M701 412L697 415 693 418 687 424H655L643 427 620 435 591 442M615 432L600 437 591 441 600 444H615L620 442M595 440l15-3"/>
              <path d="M734 385L738 378 741 376 744 374 752 378 755 388 745 395 743 401 742 405"/><path d="M740 418l4 1 5 2" stroke-width="3"/>
            </g>
          </svg>
        </div>
      </div>
      <div class="scroll"><div class="track"><div class="thumb"></div></div></div>`;
  }
}

@customElement("writer-navigator")
export class WriterNavigator extends LitElement {
  @state() private selected = "Bild1";
  static styles = [base, css`
    :host { display: flex; flex: none; width: 331px; border-left: 1px solid #9b9da0; background: #eff0f1; font: 13px/18px "Noto Sans", sans-serif; color: #31363b; position: relative; }
    .collapse { position: absolute; left: -1px; top: 50%; margin-top: -37px; width: 8px; height: 73px; background: #232629; padding-left: 1px; }
    .panel { flex: 1; min-width: 0; display: flex; flex-direction: column; padding: 7px 0 9px 15px; }
    .head { display: flex; align-items: center; height: 22px; font-weight: 700; font-size: 13px; color: #232629; }
    .grip { width: 2px; height: 16px; margin: 0 7px 0 -6px; background: repeating-linear-gradient(#3a3a38 0 2px, transparent 2px 5px); }
    .head button { margin-left: auto; padding-right: 7px; }
    .pick { display: flex; align-items: center; margin-top: 13px; gap: 6px; }
    .pick .cat { width: 148px; }
    .pick .cat select { padding-left: 27px; }
    .field > .lead { justify-self: start; margin-left: 5px; pointer-events: none; }
    .pick button.t + button.t { margin-left: 2px; }
    .num { width: 69px; }
    .bar { display: flex; align-items: center; height: 32px; }
    .i { width: 25px; height: 25px; justify-content: center; flex: none; }
    .check { background: #d0d2d3; border: 1px solid #b8babc; border-radius: 3px; }
    .sep { width: 1px; height: 14px; background: #b8babc; margin: 0 3px; }
    .dd { gap: 9px; padding: 0 4px; color: #000; }
    .head-h { font: 20px/20px "Liberation Sans", sans-serif; color: #3a3a38; }
    .tree { flex: 1; margin: 7px 0 8px; padding: 0; list-style: none; background: #fff; border: 1px solid #bbbdbf; border-radius: 2px; width: 269px; min-height: 0; overflow: hidden; }
    .tree button { width: 100%; height: 21px; padding-left: 19px; gap: 5px; color: #a0a2a3; }
    .tree .live button { color: #232629; padding-left: 2px; gap: 5px; }
    .tree .sel button { background: #3daee9; color: #fcfcfc; padding-left: 6px; gap: 31px; }
    .doc { width: 269px; }
    .deck { width: 35px; display: flex; flex-direction: column; align-items: center; padding: 9px 5px 0 0; flex: none; }
    .deck button { width: 31px; height: 34px; justify-content: center; margin-bottom: 1px; }
    .deck .menu { height: 13px; margin-bottom: 7px; }
    .deck .on { background: #d3d5d6; border: 1px solid #b8babc; border-radius: 3px; }
  `];
  render() {
    const b = (n: string) => html`<button class="i" aria-label=${n}>${icon(n)}</button>`;
    const items: [string, string][] = [
      ["headings", "Überschriften"], ["tables", "Tabellen"], ["frames", "Rahmen"], ["picture", "Bilder"], ["", "Bild1"],
      ["ole", "OLE-Objekte"], ["flag", "Lesezeichen"], ["sections", "Bereiche"], ["hyper", "Hyperlinks"], ["refs", "Verweise"],
      ["indexes", "Verzeichnisse"], ["comment", "Kommentar"], ["shapes", "Zeichnungsobjekte"], ["flag", "Felder"],
      ["footnote", "Fußnoten"], ["endnote", "Endnoten"],
    ];
    const item = ([ic, text]: [string, string]): TemplateResult => {
      if (text === "Bilder") return html`<li class="live"><button>${icon("chevron")}${icon(ic)}${text}</button></li>`;
      if (!ic) return html`<li class=${this.selected === text ? "sel" : ""}><button @click=${() => (this.selected = text)}>
        <svg class="ic" width="10" height="21" viewBox="0 0 10 21"><path d="M.5 0v10.500H10" fill="none" stroke="#fcfcfc"/></svg>${text}</button></li>`;
      return html`<li><button>${icon(ic)}${text}</button></li>`;
    };
    return html`
      <button class="collapse" aria-label="Seitenleiste ausblenden">${icon("tri")}</button>
      <div class="panel">
        <div class="head"><span class="grip"></span>Navigator<button aria-label="Schließen">${icon("closeSmall")}</button></div>
        <div class="pick">
          ${combo("Navigieren nach", "Bilder", "cat", html`<svg class="lead" width="16" height="16" viewBox="0 0 16 16">${picture}</svg>`)}
          <button class="t" aria-label="Zurück">${icon("triUp")}</button>
          <button class="t" aria-label="Vor">${icon("triDown")}</button>
          ${spin("Seite", "1", "num", true, true)}
        </div>
        <div class="bar">${b("navWin")}<span class="sep"></span>${b("header")}${b("footer")}${b("anchorSmall")}${b("clip")}<span class="sep"></span>
          <button class="dd" aria-label="Überschriftenebenen"><span class="head-h">H</span>${icon("drop")}</button></div>
        <div class="bar"><button class="i check" aria-label="Inhaltsansicht">${icon("check")}</button><span class="sep"></span>${b("prev")}${b("next")}${b("promote")}${b("demote")}<span class="sep"></span>
          <button class="dd" aria-label="Ziehmodus">${icon("link")}${icon("drop")}</button></div>
        <ul class="tree">${items.map(item)}</ul>
        ${combo("Dokument", "Unbenannt 1 (Aktiv)", "doc")}
      </div>
      <div class="deck">
        <button class="menu" aria-label="Einstellungen">${icon("menu")}</button>
        ${["props", "styles", "gallery", "compass", "pageTab", "inspect"].map((n) => html`<button class=${n === "compass" ? "on" : ""} aria-label=${n}>${icon(n)}</button>`)}
      </div>`;
  }
}

@customElement("writer-status")
export class WriterStatus extends LitElement {
  static styles = [base, css`
    :host { display: flex; flex: none; height: 25px; padding-top: 1px; border-top: 1px solid #9b9da0; background: linear-gradient(90deg, #d8d9db, #eff0f1 8px); font: 12px/16px "Noto Sans", sans-serif; color: #31363b; align-items: center; }
    .s { display: flex; align-items: center; flex: none; padding-left: 9px; gap: 5px; }
    .s + .s::before { content: ""; width: 1px; height: 1px; background: #8a8c8e; margin-left: -9px; margin-right: 3px; }
    .a { width: 31px; padding-left: 12px; } .b { width: 245px; } .c { width: 283px; } .d { width: 223px; }
    .e { flex: 1; } .f { width: 69px; } .g { width: 30px; } .h { width: 31px; } .i { width: 375px; }
    .i span { width: 159px; }
    .j { width: 77px; padding-left: 10px; gap: 6px; } .k { width: 144px; } .l { width: 52px; }
    .range { appearance: none; width: 98px; height: 14px; margin: 0; background: linear-gradient(#31363b, #31363b) 0 50% / 100% 2px no-repeat, linear-gradient(#31363b, #31363b) 41% 50% / 2px 10px no-repeat; }
    .range::-webkit-slider-thumb { appearance: none; width: 5px; height: 14px; background: #d8d9da; border: 1px solid #31363b; border-radius: 1px; }
  `];
  render() {
    return html`
      <div class="s a">${icon("saveRed")}</div>
      <div class="s b">Seite 1 von 1</div>
      <div class="s c">0 Wörter, 0 Zeichen</div>
      <div class="s d">Standard</div>
      <div class="s e"></div>
      <div class="s f"></div>
      <div class="s g">${icon("selMode")}</div>
      <div class="s h"></div>
      <div class="s i">${icon("position")}<span>0,00 / 0,00</span>${icon("size")}<span>6,69 x 2,21</span></div>
      <div class="s j">${icon("onePage")}${icon("twoPages")}${icon("book")}</div>
      <div class="s k"><button aria-label="Verkleinern">${icon("minus")}</button><input class="range" type="range" aria-label="Maßstab" min="0" max="100" value="49" /><button aria-label="Vergrößern">${icon("plus")}</button></div>
      <div class="s l">100 %</div>`;
  }
}

@customElement("app-root")
export class AppRoot extends LitElement {
  @property() tab = "Bild";
  static styles = [base, css`
    :host { display: flex; height: 100vh; position: relative; background: #fff; overflow: hidden; font: 14px/20px "Noto Sans", sans-serif; color: #31363b; }
    desk-dock { width: 60px; flex: none; }
    .window { flex: 1; min-width: 0; display: flex; flex-direction: column; background: #eff0f1; margin-right: 15px; }
    .title { height: 29px; flex: none; display: grid; grid-template-columns: 1fr auto 1fr; align-items: center; background: #dedfe1; padding: 0 8px 1px; font-size: 13px; }
    .left { display: flex; gap: 10px; align-items: center; }
    .ctl { display: flex; gap: 12px; justify-content: flex-end; }
    .top { height: 32px; flex: none; display: flex; align-items: flex-start; position: relative; z-index: 1; }
    .quick { display: flex; align-items: center; width: 197px; padding-left: 5px; height: 30px; flex: none; }
    .quick button { color: #000; flex: none; }
    .quick .d { gap: 7px; width: 36px; }
    .quick .d.first { margin-left: 7px; }
    .quick .mid { margin-left: 1px; }
    .quick .d.off { color: #9b9d9f; }
    .tabs { display: flex; margin-top: 2px; }
    .tabs button { width: 100px; height: 32px; justify-content: center; background: #c6c7c8; padding: 0 4px 3px 0; font-size: 13px; }
    .tabs button.on { background: #eff0f1; border-top: 3px solid #3daee9; padding-bottom: 7px; border-left: 1px solid #b8babc; }
    .burger { margin: 2px 2px 0 auto; width: 38px; height: 26px; justify-content: center; background: #fcfcfc; border: 1px solid #bbbdbf; border-radius: 3px; box-shadow: 0 1px 1px #00000026; }
    .work { flex: 1; min-height: 0; display: flex; margin-top: 1px; }
    .red { position: absolute; right: 0; top: 220px; pointer-events: none; filter: drop-shadow(1px 2px 1px #0000004d); }
  `];
  render() {
    const tabs: [string, string, string][] = [
      ["", "D", "atei"], ["", "S", "tart"], ["", "E", "infügen"], ["", "L", "ayout"], ["", "B", "ezüge"],
      ["Über", "p", "rüfen"], ["", "A", "nsicht"], ["", "B", "ild"], ["E", "x", "tension"], ["E", "x", "tras"],
    ];
    return html`
      <desk-dock></desk-dock>
      <div class="window">
        <div class="title">
          <div class="left">${icon("docMini")}${icon("pin")}</div>
          <div>Unbenannt 1 - LibreOffice Writer</div>
          <div class="ctl"><button aria-label="Minimieren">${icon("chevron")}</button><button aria-label="Maximieren">${icon("diamond")}</button><button aria-label="Schließen">${icon("close")}</button></div>
        </div>
        <div class="top">
          <div class="quick">
            <button aria-label="Neu">${icon("newdoc")}</button>
            <button class="d first" aria-label="Öffnen">${icon("open")}${icon("drop")}</button>
            <button class="d" aria-label="Speichern">${icon("saveDot")}${icon("drop")}</button>
            <button class="d mid" aria-label="Rückgängig">${icon("undo")}${icon("drop")}</button>
            <button class="d off" aria-label="Wiederholen">${icon("redo")}${icon("drop")}</button>
            <button class="mid" aria-label="Drucken">${icon("print")}</button>
          </div>
          <div class="tabs" role="tablist">
            ${tabs.map(([a, m, z]) => {
              const name = a + m + z;
              return html`<button role="tab" aria-selected=${this.tab === name} class=${this.tab === name ? "on" : ""} @click=${() => (this.tab = name)}><span>${a}<u>${m}</u>${z}</span></button>`;
            })}
          </div>
          <button class="burger" aria-label="Menü">${icon("menuBold")}</button>
        </div>
        <writer-ribbon></writer-ribbon>
        <div class="work"><writer-canvas></writer-canvas><writer-navigator></writer-navigator></div>
        <writer-status></writer-status>
      </div>
      <svg class="red" width="215" height="150" viewBox="1720 220 215 150">
        <g fill="none" stroke="#fa0505" stroke-width="3" stroke-linecap="round" stroke-linejoin="round">
          <path d="M1855 268L1837 272 1820 278 1797 293 1782 303 1767 322 1752 339"/>
          <path d="M1730 333H1750L1773 337 1770 340 1752 348 1740 355 1732 357 1731 352 1733 335M1752 338l17 0"/>
          <path d="M1912 234C1922 240 1929 248 1933 258 1936 268 1936 280 1935 295 1934 305 1929 312 1922 317 1917 321 1912 322 1905 321 1897 320 1884 312 1875 305 1866 298 1861 287 1860 273 1861 262 1868 251 1876 246 1884 240 1900 236 1912 238"/>
        </g>
      </svg>`;
  }
}
